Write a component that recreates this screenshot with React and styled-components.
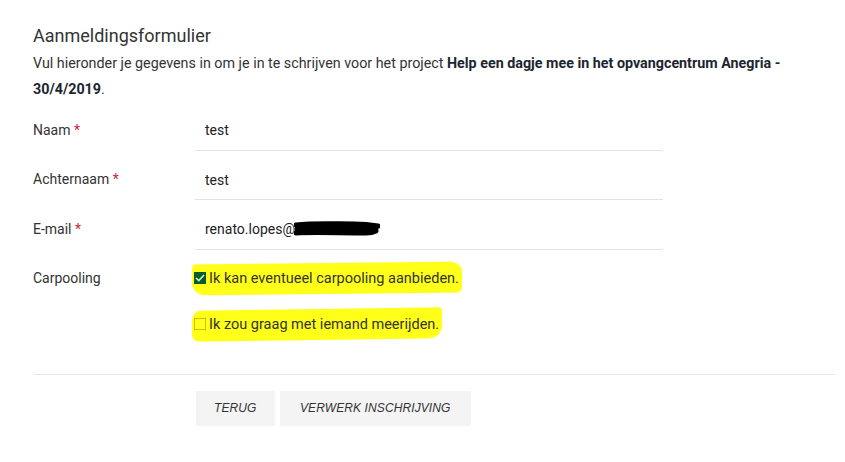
import styled, { createGlobalStyle } from "styled-components"

const GlobalStyle = createGlobalStyle`
  body {
    margin: 0;
    background: #fff;
    font-family: Roboto, "Liberation Sans", sans-serif;
    color: #333;
  }
`

const Page = styled.div`
  padding: 24px 10px 30px 33px;
`

const Title = styled.h2`
  margin: 0 0 2px;
  font-size: 18px;
  font-weight: 400;
  color: #333;
  line-height: 24px;
`

const Intro = styled.p`
  margin: 0 0 4px;
  font-size: 14.3px;
  line-height: 26px;
  color: #333;

  & b {
    color: #1c2630;
    font-weight: 700;
  }
`

const Row = styled.div`
  display: flex;
  align-items: ${(p) => (p.$top ? "flex-start" : "center")};
  min-height: 49.5px;
  padding-top: ${(p) => (p.$top ? "8px" : "0")};
`

const Label = styled.label`
  width: 162px;
  flex-shrink: 0;
  font-size: 14px;
  color: #333;
  padding-bottom: 2px;

  & span {
    color: #d0213c;
  }
`

const Field = styled.div`
  position: relative;
  width: 468px;
  height: 40px;
  display: flex;
  align-items: center;
  border-bottom: 1px solid #e3e3e3;
  box-sizing: border-box;
  padding: 0 10px;
  font-size: 14px;
  color: #222;
`

const Options = styled.div`
  display: flex;
  flex-direction: column;
  gap: 15px;
`

const Highlight = styled.label`
  position: relative;
  z-index: 0;
  display: inline-flex;
  align-items: center;
  gap: 3px;
  padding: 7px 3px 7px 1px;
  margin-left: -2px;
  font-size: 14.5px;
  color: #333;

  &::before {
    content: "";
    position: absolute;
    z-index: -1;
    inset: 0 0 0 -1px;
    background: #ffff1a;
    border-radius: ${(p) => p.$shape};
    transform: skewY(${(p) => p.$skew}deg);
    filter: blur(0.6px);
  }
`

const Box = styled.span`
  width: 12px;
  height: 12px;
  box-sizing: border-box;
  display: inline-flex;
  align-items: center;
  justify-content: center;
  background: ${(p) => (p.$checked ? "#0b5a2c" : "transparent")};
  border: 1px solid ${(p) => (p.$checked ? "#0b5a2c" : "#c9c200")};
`

const Divider = styled.hr`
  border: 0;
  border-top: 1px solid #e6e6e6;
  margin: 34px 0 16px;
`

const Actions = styled.div`
  display: flex;
  gap: 5px;
  padding-left: 163px;
`

const Button = styled.button`
  height: 35px;
  padding: 0 ${(p) => p.$pad}px;
  border: 0;
  background: #f4f4f4;
  font-family: "Liberation Sans", Arial, sans-serif;
  font-style: italic;
  font-size: 12px;
  color: #333;
  letter-spacing: 0.1px;
`

const Redacted = () => (
  <svg width="86" height="16" viewBox="0 0 86 16" style={{ marginLeft: -1 }}>
    <path
      d="M2 4 C20 2 40 3 60 3 C70 3 78 4 84 5 M3 8 C25 6 50 7 82 8 M2 12 C20 11 45 12 72 12 C76 12 80 11 82 10"
      stroke="#000"
      strokeWidth="5"
      fill="none"
      strokeLinecap="round"
    />
  </svg>
)

const Check = () => (
  <svg width="10" height="8" viewBox="0 0 10 8">
    <path d="M1 4 L3.8 6.6 L9 1" stroke="#c8f0c8" strokeWidth="1.7" fill="none" />
  </svg>
)

const App = () => {
  return (
    <Page>
      <GlobalStyle />
      <Title>Aanmeldingsformulier</Title>
      <Intro>
        Vul hieronder je gegevens in om je in te schrijven voor het project{" "}
        <b>Help een dagje mee in het opvangcentrum Anegria -</b>
        <br />
        <b>30/4/2019</b>.
      </Intro>

      <Row>
        <Label>Naam <span>*</span></Label>
        <Field>test</Field>
      </Row>
      <Row>
        <Label>Achternaam <span>*</span></Label>
        <Field>test</Field>
      </Row>
      <Row>
        <Label>E-mail <span>*</span></Label>
        <Field>renato.lopes@<Redacted /></Field>
      </Row>
      <Row $top>
        <Label style={{ paddingTop: 7 }}>Carpooling</Label>
        <Options>
          <div>
            <Highlight $shape="3px 12px 6px 14px / 5px 10px 5px 12px" $skew={-0.6}>
              <Box $checked><Check /></Box>
              Ik kan eventueel carpooling aanbieden.
            </Highlight>
          </div>
          <div>
            <Highlight $shape="8px 4px 14px 8px / 10px 3px 12px 6px" $skew={-0.8}>
              <Box />
              Ik zou graag met iemand meerijden.
            </Highlight>
          </div>
        </Options>
      </Row>

      <Divider />
      <Actions>
        <Button $pad={18}>TERUG</Button>
        <Button $pad={20.5}>VERWERK INSCHRIJVING</Button>
      </Actions>
    </Page>
  )
}

export default App
